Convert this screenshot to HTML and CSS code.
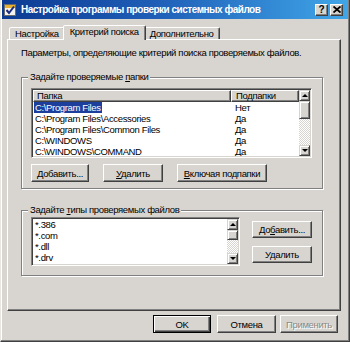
FILE: index.html
```html
<!DOCTYPE html>
<html>
<head>
<meta charset="utf-8">
<link rel="stylesheet" href="styles.css">
</head>
<body>
<div class="window">
  <div class="titlebar">
    <svg class="appicon" width="12" height="12" viewBox="0 0 12 12">
      <rect x="0.5" y="0.5" width="11" height="11" fill="#f4f2ee" stroke="#6b6b6b"/>
      <rect x="1" y="1" width="10" height="3" fill="#e8b030"/>
      <path d="M2.5 6 L5 9 L10 2.5" fill="none" stroke="#1a2a80" stroke-width="2"/>
    </svg>
    <span class="title">Настройка программы проверки системных файлов</span>
    <div class="capbtns">
      <span class="capbtn">?</span>
      <span class="capbtn">
        <svg width="8" height="7" viewBox="0 0 8 7"><path d="M0.5 0.5 L7.5 6.5 M7.5 0.5 L0.5 6.5" stroke="#000" stroke-width="1.8"/></svg>
      </span>
    </div>
  </div>
  <div class="body">
    <div class="tabs">
      <div class="tab">Настройка</div>
      <div class="tab active">Критерий поиска</div>
      <div class="tab">Дополнительно</div>
    </div>
    <div class="panel">
      <p class="desc">Параметры, определяющие критерий поиска проверяемых файлов.</p>
      <div class="group g1">
        <span class="legend">Задайте проверяемые <u>п</u>апки</span>
        <div class="sunken lv">
          <div class="lv-main">
            <div class="lv-head"><span class="hcell c1">Папка</span><span class="hcell c2">Подпапки</span></div>
            <div class="lv-row"><span class="c1"><span class="sel">C:\Program Files</span></span><span class="c2">Нет</span></div>
            <div class="lv-row"><span class="c1"><span class="item">C:\Program Files\Accessories</span></span><span class="c2">Да</span></div>
            <div class="lv-row"><span class="c1"><span class="item">C:\Program Files\Common Files</span></span><span class="c2">Да</span></div>
            <div class="lv-row"><span class="c1"><span class="item">C:\WINDOWS</span></span><span class="c2">Да</span></div>
            <div class="lv-row"><span class="c1"><span class="item">C:\WINDOWS\COMMAND</span></span><span class="c2">Да</span></div>
          </div>
          <div class="sb">
            <div class="sb-btn"><i class="up"></i></div>
            <div class="sb-track"><div class="sb-thumb t1"></div></div>
            <div class="sb-btn"><i class="down"></i></div>
          </div>
        </div>
        <div class="btnrow">
          <button class="btn w58"><u>Д</u>обавить...</button>
          <button class="btn w60"><u>У</u>далить</button>
          <button class="btn w90"><u>В</u>ключая подпапки</button>
        </div>
      </div>
      <div class="group g2">
        <span class="legend">Задайте <u>т</u>ипы проверяемых файлов</span>
        <div class="sunken lb">
          <div class="lb-main">
            <div class="lb-row">*.386</div>
            <div class="lb-row">*.com</div>
            <div class="lb-row">*.dll</div>
            <div class="lb-row">*.drv</div>
            <div class="lb-row">*.</div>
          </div>
          <div class="sb">
            <div class="sb-btn"><i class="up"></i></div>
            <div class="sb-track"><div class="sb-thumb t2"></div></div>
            <div class="sb-btn"><i class="down"></i></div>
          </div>
        </div>
        <div class="btncol">
          <button class="btn w60 h17">До<u>б</u>авить...</button>
          <button class="btn w60 h17">Удалить</button>
        </div>
      </div>
    </div>
    <div class="footer">
      <button class="btn def">OK</button>
      <button class="btn fb">Отмена</button>
      <button class="btn fb disabled">Применить</button>
    </div>
  </div>
</div>
</body>
</html>
```

FILE: styles.css
```css
* { box-sizing: border-box; }
html, body { margin: 0; padding: 0; }
body {
  width: 350px;
  height: 342px;
  overflow: hidden;
  background: #d8d5d0;
  font-family: "Liberation Sans", Arial, sans-serif;
  font-size: 9.5px;
  letter-spacing: -0.35px;
  color: #000;
}
u { text-decoration: underline; text-underline-offset: 1px; }

.window {
  width: 350px;
  height: 342px;
  background: #d8d5d0;
  border-left: 1px solid #e8e6e2;
  border-right: 1px solid #404040;
  border-bottom: 1px solid #404040;
  box-shadow: inset -1px -1px 0 #808080, inset 1px 0 0 #ffffff;
  padding: 0 1px 1px 1px;
  display: flex;
  flex-direction: column;
}

.titlebar {
  height: 19px;
  flex: none;
  display: flex;
  align-items: center;
  padding: 0 5px 0 2px;
  background: linear-gradient(90deg, #0c3a92 0%, #1f5fb8 45%, #40a6e8 100%);
  color: #fff;
  font-weight: bold;
  font-size: 10px;
  letter-spacing: -0.5px;
}
.appicon { flex: none; margin-right: 5px; }
.title { white-space: nowrap; }
.capbtns { margin-left: auto; display: flex; gap: 2px; }
.capbtn {
  width: 13px;
  height: 12px;
  background: #d8d5d0;
  border: 1px solid;
  border-color: #fff #404040 #404040 #fff;
  box-shadow: inset -1px -1px 0 #808080;
  color: #000;
  font-size: 10px;
  letter-spacing: 0;
  font-weight: bold;
  display: flex;
  align-items: center;
  justify-content: center;
  line-height: 1;
}

.body {
  flex: 1;
  padding: 6px 7px 0 5px;
  display: flex;
  flex-direction: column;
}

.tabs {
  height: 14px;
  display: flex;
  align-items: flex-end;
  padding-left: 2px;
  position: relative;
  z-index: 1;
}
.tab {
  height: 12px;
  line-height: 11px;
  padding: 0 5px;
  border: 1px solid;
  border-bottom: none;
  border-color: #fff #404040 transparent #fff;
  box-shadow: inset -1px 0 0 #808080;
  border-radius: 2px 2px 0 0;
  background: #d8d5d0;
  white-space: nowrap;
}
.tab.active {
  height: 15px;
  margin: 0 -2px -1px -2px;
  padding: 0 6px;
  line-height: 12px;
  position: relative;
  z-index: 2;
}

.panel {
  height: 272px;
  border: 1px solid;
  border-color: #fff #404040 #404040 #fff;
  box-shadow: inset -1px -1px 0 #808080;
  padding: 7px 0 0 13px;
}
.desc {
  margin: 0;
  line-height: 12px;
  height: 12px;
  white-space: nowrap;
}

.group {
  position: relative;
  width: 302px;
  border: 1px solid #808080;
  box-shadow: 1px 1px 0 #fff, inset 1px 1px 0 #fff;
}
.legend {
  position: absolute;
  top: -7px;
  left: 6px;
  padding: 0 2px;
  line-height: 12px;
  background: #d8d5d0;
  white-space: nowrap;
}
.g1 {
  margin-top: 18px;
  height: 112px;
  padding: 10px 0 0 9px;
}
.g2 {
  margin-top: 21px;
  height: 66px;
  padding: 6px 0 0 9px;
  display: flex;
  align-items: flex-start;
}

.sunken {
  background: #fff;
  border: 1px solid;
  border-color: #808080 #fff #fff #808080;
  box-shadow: inset 1px 1px 0 #404040, inset -1px -1px 0 #d8d5d0;
  padding: 1px;
  display: flex;
}
.lv { width: 281px; height: 70px; }
.lb { width: 209px; height: 49px; }

.lv-main { flex: 1; overflow: hidden; }
.lv-head { display: flex; height: 12px; }
.hcell {
  height: 12px;
  line-height: 10px;
  background: #d8d5d0;
  border: 1px solid;
  border-color: #fff #404040 #404040 #fff;
  box-shadow: inset -1px -1px 0 #808080;
  white-space: nowrap;
}
.hcell.c1 { width: 198px; padding-left: 3px; }
.hcell.c2 { flex: 1; padding-left: 4px; }
.lv-row { display: flex; height: 11px; line-height: 11px; white-space: nowrap; }
.lv-row .c1 { width: 198px; padding-left: 1px; }
.lv-row .c2 { flex: 1; padding-left: 4px; }
.sel { background: #1c3f9e; color: #fff; padding: 0 1px; display: inline-block; }
.item { padding: 0 1px; display: inline-block; }

.lb-main { flex: 1; padding-left: 2px; overflow: hidden; }
.lb-row { height: 11px; line-height: 11px; }

.sb {
  width: 11px;
  display: flex;
  flex-direction: column;
  flex: none;
}
.sb-btn, .sb-thumb {
  background: #d8d5d0;
  border: 1px solid;
  border-color: #d8d5d0 #404040 #404040 #d8d5d0;
  box-shadow: inset 1px 1px 0 #fff, inset -1px -1px 0 #808080;
}
.sb-btn {
  height: 11px;
  display: flex;
  align-items: center;
  justify-content: center;
  flex: none;
}
.sb-track {
  flex: 1;
  background: repeating-conic-gradient(#ffffff 0 25%, #d8d5d0 0 50%) 0 0 / 2px 2px;
}
.sb-thumb.t1 { height: 18px; }
.sb-thumb.t2 { height: 10px; }
.up, .down {
  width: 0;
  height: 0;
  border-left: 3px solid transparent;
  border-right: 3px solid transparent;
}
.up { border-bottom: 3px solid #000; }
.down { border-top: 3px solid #000; }

.btn {
  font-family: inherit;
  font-size: inherit;
  letter-spacing: inherit;
  color: #000;
  height: 18px;
  padding: 0;
  background: #d8d5d0;
  border: 1px solid;
  border-color: #fff #404040 #404040 #fff;
  box-shadow: inset -1px -1px 0 #808080;
  white-space: nowrap;
  border-radius: 0;
}
.w58 { width: 58px; }
.w60 { width: 60px; }
.w90 { width: 90px; }
.h17 { height: 17px; }
.btnrow { display: flex; gap: 14px; margin-top: 6px; }
.btncol {
  display: flex;
  flex-direction: column;
  gap: 8px;
  margin: 4px 0 0 12px;
}

.footer {
  display: flex;
  justify-content: flex-end;
  margin-top: 4px;
  padding-right: 3px;
}
.def {
  width: 58px;
  border: 1px solid #000;
  box-shadow: inset 1px 1px 0 #fff, inset -1px -1px 0 #404040, inset -2px -2px 0 #808080;
}
.fb { width: 59px; margin-left: 6px; }
.fb.disabled { margin-left: 4px; width: 58px; color: #8a8883; text-shadow: 1px 1px 0 #fff; }
```
